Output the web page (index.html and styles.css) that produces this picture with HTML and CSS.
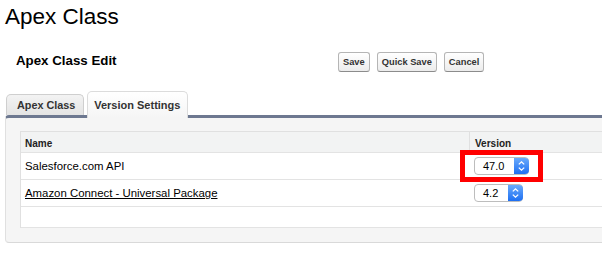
FILE: index.html
```html
<!DOCTYPE html>
<html lang="en">
<head>
<meta charset="UTF-8">
<meta name="viewport" content="width=device-width, initial-scale=1.0">
<title>Apex Class</title>
<link rel="stylesheet" href="styles.css">
</head>
<body>

<h1 class="page-title">Apex Class</h1>

<div class="edit-bar">
    <h2 class="edit-title">Apex Class Edit</h2>
    <div class="buttons">
        <button class="btn">Save</button>
        <button class="btn">Quick Save</button>
        <button class="btn">Cancel</button>
    </div>
</div>

<div class="tabs">
    <div class="tab">Apex Class</div>
    <div class="tab active">Version Settings</div>
</div>

<div class="panel">
    <div class="list">
        <div class="list-row head">
            <div class="cell name">Name</div>
            <div class="cell version">Version</div>
        </div>
        <div class="list-row">
            <div class="cell name">Salesforce.com API</div>
            <div class="cell version">
                <span class="select marked">
                    <span class="select-value">47.0</span>
                    <span class="select-arrows">
                        <svg width="15" height="16" viewBox="0 0 15 16"><path d="M4.8 6.4 L7.5 3.8 L10.2 6.4 M4.8 9.6 L7.5 12.2 L10.2 9.6" fill="none" stroke="#fff" stroke-width="1.3"/></svg>
                    </span>
                </span>
            </div>
        </div>
        <div class="list-row">
            <div class="cell name"><a href="#">Amazon Connect - Universal Package</a></div>
            <div class="cell version">
                <span class="select">
                    <span class="select-value">4.2</span>
                    <span class="select-arrows">
                        <svg width="15" height="16" viewBox="0 0 15 16"><path d="M4.8 6.4 L7.5 3.8 L10.2 6.4 M4.8 9.6 L7.5 12.2 L10.2 9.6" fill="none" stroke="#fff" stroke-width="1.3"/></svg>
                    </span>
                </span>
            </div>
        </div>
        <div class="list-row empty">
            <div class="cell name"></div>
            <div class="cell version"></div>
        </div>
    </div>
</div>

</body>
</html>
```

FILE: styles.css
```css
body {
    font-family: "Liberation Sans", Arial, sans-serif;
    margin: 0;
    padding: 0;
    background-color: #fff;
    color: #000;
}
.page-title {
    margin: 0;
    padding: 4px 0 0 5px;
    font-size: 22.5px;
    font-weight: normal;
    line-height: 26px;
}
.edit-bar {
    display: grid;
    grid-template-columns: 338px auto;
    align-items: center;
    margin-top: 22px;
}
.edit-title {
    margin: -2px 0 0 0;
    padding-left: 16px;
    font-size: 13.3px;
    line-height: 20px;
}
.buttons {
    display: flex;
    gap: 7px;
}
.btn {
    height: 20px;
    padding: 0 4px;
    font-family: inherit;
    font-size: 9.3px;
    font-weight: bold;
    color: #333;
    background: linear-gradient(#fff, #ececec);
    border: 1px solid #b5b5b5;
    border-bottom-color: #8c8c8c;
    border-radius: 3px;
}
.tabs {
    display: flex;
    align-items: flex-end;
    gap: 3px;
    margin-top: 19px;
    padding-left: 6px;
}
.tab {
    box-sizing: border-box;
    height: 21px;
    padding: 3px 8px 0 10px;
    font-size: 10.8px;
    font-weight: bold;
    line-height: 14px;
    color: #333;
    background: linear-gradient(#f3f3f3, #e4e4e4);
    border: 1px solid #cfcfcf;
    border-bottom: none;
    border-radius: 5px 5px 0 0;
}
.tab.active {
    position: relative;
    z-index: 1;
    height: 27px;
    margin-bottom: -3px;
    padding: 6px 7px 0 6px;
    font-size: 11px;
    background: linear-gradient(#fff, #f5f5f5);
    border-color: #dcdcdc;
}
.panel {
    margin-left: 5px;
    padding: 13px 0 14px 14px;
    background-color: #f5f5f5;
    border-top: 3px solid #6d7890;
    border-left: 1px solid #e0e0e0;
    border-bottom: 1px solid #d9d9d9;
    border-radius: 4px 0 0 4px;
}
.list {
    background-color: #fff;
    border-top: 1px solid #e0e0e0;
    border-left: 1px solid #e0e0e0;
}
.list-row {
    box-sizing: border-box;
    display: grid;
    grid-template-columns: 449px 1fr;
    height: 27px;
    border-bottom: 1px solid #e3e3e3;
    font-size: 11.4px;
}
.list-row.head {
    height: 21px;
    background-color: #f2f3f3;
    font-size: 10px;
    font-weight: bold;
    color: #222;
}
.list-row.empty {
    height: 21px;
}
.cell {
    display: flex;
    align-items: center;
}
.cell.name {
    padding-left: 4px;
}
.cell.version {
    padding-left: 4px;
}
.head .cell {
    padding-top: 2px;
}
.head .cell.name {
    border-right: 1px solid #e0e0e0;
}
.head .cell.version {
    padding-left: 5px;
}
.cell a {
    color: #000;
    text-decoration: underline;
}
.select {
    position: relative;
    box-sizing: border-box;
    display: inline-flex;
    height: 18px;
    border: 1px solid #bdbdbd;
    border-radius: 4px;
    background-color: #fff;
    font-size: 11px;
}
.select-value {
    padding: 0 10px 0 8px;
    line-height: 16px;
}
.select-arrows {
    width: 15px;
    margin-right: -1px;
    background: linear-gradient(#6aaafb, #1d6ff2);
    border-radius: 0 4px 4px 0;
}
.select-arrows svg {
    display: block;
}
.select.marked::after {
    content: "";
    position: absolute;
    top: -8px;
    left: -15px;
    right: -15px;
    bottom: -8px;
    border: 5px solid #f00;
}
```
